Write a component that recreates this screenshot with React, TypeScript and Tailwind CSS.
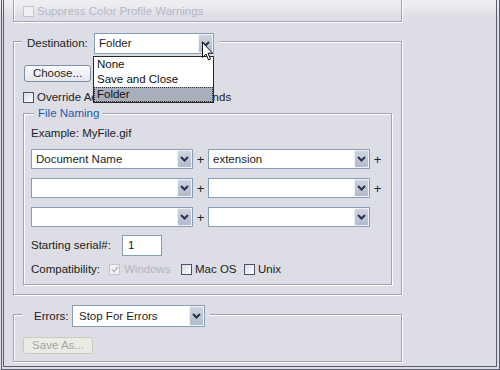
import React from "react";

const BG = "bg-[#dcdde5]";

function Chevron() {
  return (
    <svg width="9" height="6" viewBox="0 0 9 6">
      <path d="M1 1 L4.5 4.5 L8 1" fill="none" stroke="#27324f" strokeWidth="2" />
    </svg>
  );
}

function Combo({
  cls,
  text,
  textCls = "pl-[4px]",
}: {
  cls: string;
  text?: string;
  textCls?: string;
}) {
  return (
    <div className={`flex border border-[#84a0b8] bg-white ${cls}`}>
      <div className={`flex-1 flex items-center whitespace-nowrap text-[#1e1e1e] ${textCls}`}>{text}</div>
      <div className="w-[15px] flex items-center justify-center border border-[#eef0f5] rounded-[2px] bg-[linear-gradient(180deg,#cfd4df,#b3bacb)]">
        <Chevron />
      </div>
    </div>
  );
}

function Check({ checked, disabled }: { checked?: boolean; disabled?: boolean }) {
  return (
    <div
      className={
        disabled
          ? "w-[11px] h-[11px] border border-[#c3c6cf] bg-[#f1f1f4] flex items-center justify-center"
          : "w-[11px] h-[11px] border border-[#4a5468] bg-[linear-gradient(135deg,#d9dbe2,#ffffff)] flex items-center justify-center"
      }
    >
      {checked && (
        <svg width="8" height="7" viewBox="0 0 8 7">
          <path d="M1 3.5 L3 5.5 L7 1" fill="none" stroke={disabled ? "#b6b9c2" : "#1f2a44"} strokeWidth="1.6" />
        </svg>
      )}
    </div>
  );
}

const groove =
  "border border-[#a2a3ad] shadow-[inset_1px_1px_0_#ffffff,1px_1px_0_#ffffff]";

export default function App() {
  return (
    <div className="relative w-[500px] h-[370px] overflow-hidden bg-[linear-gradient(180deg,#eeeef2_0px,#ebebf0_6px,#dcdde5_18px)] font-['Liberation_Sans',Arial,sans-serif] text-[11.5px] leading-[13px] text-[#222]">
      <div className="ml-px w-[499px] h-[370px] border-x border-b border-[#5b5d6c] pl-px pr-[2px] pb-[2px]">
        <div className="h-full border-x border-b border-[#5b5d6c] pl-[9px]">
          {/* top panel */}
          <div className="w-[389px] h-[22px] border-x border-b border-[#a2a3ad] shadow-[inset_1px_0_0_#ffffff,1px_1px_0_#ffffff] pl-[9px] pt-[5px]">
            <div className="flex items-center h-[13px] gap-[3px]">
              <Check disabled />
              <span className="text-[#b4b6c2] whitespace-nowrap">Suppress Color Profile Warnings</span>
            </div>
          </div>

          {/* destination box */}
          <div className={`mt-[19px] w-[389px] pb-[9px] ${groove}`}>
            <div className="-mt-[9px] ml-[8px] flex h-[21px]">
              <div className={`w-[72px] pl-[5px] flex items-center ${BG}`}>Destination:</div>
              <Combo cls="w-[120px] h-[21px]" text="Folder" />
              <div className={`w-[5px] ${BG}`} />
            </div>

            <div className="mt-[11px] ml-[10px] w-[67px] h-[17px] rounded-[3px] border border-[#7d8ea8] bg-[linear-gradient(180deg,#fbfbfd,#e4e6ec)] flex items-center justify-center text-[#1e1e1e]">
              Choose...
            </div>

            <div className="mt-[9px] ml-[9px] h-[13px] flex items-center gap-[3px]">
              <Check />
              <span className="whitespace-nowrap">Override Action &quot;Save As&quot; Commands</span>
            </div>

            {/* file naming */}
            <div className={`mt-[9px] ml-[9px] w-[369px] pb-[8px] ${groove}`}>
              <div className="-mt-[7px] ml-[10px] h-[13px] flex">
                <span className={`px-[4px] text-[#1f5bb0] ${BG}`}>File Naming</span>
              </div>
              <div className="mt-[7px] ml-[7px] h-[13px]">Example: MyFile.gif</div>

              <div className="mt-[9px] ml-[7px] flex h-[20px]">
                <Combo cls="w-[162px] h-[20px]" text="Document Name" />
                <span className="w-[15px] flex items-center justify-center text-[13px]">+</span>
                <Combo cls="w-[162px] h-[20px]" text="extension" />
                <span className="w-[15px] flex items-center justify-center text-[13px]">+</span>
              </div>
              <div className="mt-[9px] ml-[7px] flex h-[20px]">
                <Combo cls="w-[162px] h-[20px]" />
                <span className="w-[15px] flex items-center justify-center text-[13px]">+</span>
                <Combo cls="w-[162px] h-[20px]" />
                <span className="w-[15px] flex items-center justify-center text-[13px]">+</span>
              </div>
              <div className="mt-[9px] ml-[7px] flex h-[20px]">
                <Combo cls="w-[162px] h-[20px]" />
                <span className="w-[15px] flex items-center justify-center text-[13px]">+</span>
                <Combo cls="w-[162px] h-[20px]" />
              </div>

              <div className="mt-[8px] ml-[7px] flex h-[21px] items-center">
                <span className="w-[91px]">Starting serial#:</span>
                <div className="w-[40px] h-[21px] border border-[#84a0b8] bg-white pl-[5px] flex items-center">1</div>
              </div>

              <div className="mt-[7px] ml-[7px] flex h-[13px] items-center">
                <span className="w-[78px]">Compatibility:</span>
                <div className="w-[72px] flex items-center gap-[4px]">
                  <Check checked disabled />
                  <span className="text-[#b4b6c2]">Windows</span>
                </div>
                <div className="w-[63px] flex items-center gap-[3px]">
                  <Check />
                  <span>Mac OS</span>
                </div>
                <div className="flex items-center gap-[3px]">
                  <Check />
                  <span>Unix</span>
                </div>
              </div>
            </div>
          </div>

          {/* errors box */}
          <div className={`mt-[19px] w-[389px] pb-[7px] ${groove}`}>
            <div className="-mt-[10px] ml-[8px] flex h-[22px]">
              <div className={`w-[50px] pl-[12px] flex items-center ${BG}`}>Errors:</div>
              <Combo cls="w-[133px] h-[22px]" text="Stop For Errors" textCls="pl-[6px]" />
              <div className={`w-[5px] ${BG}`} />
            </div>
            <div className="mt-[10px] ml-[9px] w-[70px] h-[17px] rounded-[3px] border border-[#c9cac4] bg-[#ebebe6] flex items-center justify-center text-[#a3a4a8]">
              Save As...
            </div>
          </div>
        </div>
      </div>

      {/* open dropdown list */}
      <div className="absolute left-[93px] top-[56px] w-[121px] border border-[#262626] bg-white text-[#111]">
        <div className="h-[15px] pl-[3px] flex items-center">None</div>
        <div className="h-[15px] pl-[3px] flex items-center">Save and Close</div>
        <div className="h-[15px] pl-[2px] flex items-center bg-[#a9aebc] border border-dotted border-[#333]">Folder</div>
      </div>

      {/* mouse cursor */}
      <svg className="absolute left-[202px] top-[42px]" width="12" height="20" viewBox="0 0 12 20">
        <path d="M0.5 0.5 L0.5 15.5 L4 12 L6.5 18 L8.5 17 L6 11.2 L10.5 11.2 Z" fill="#ffffff" stroke="#111" strokeWidth="1" />
      </svg>
    </div>
  );
}
